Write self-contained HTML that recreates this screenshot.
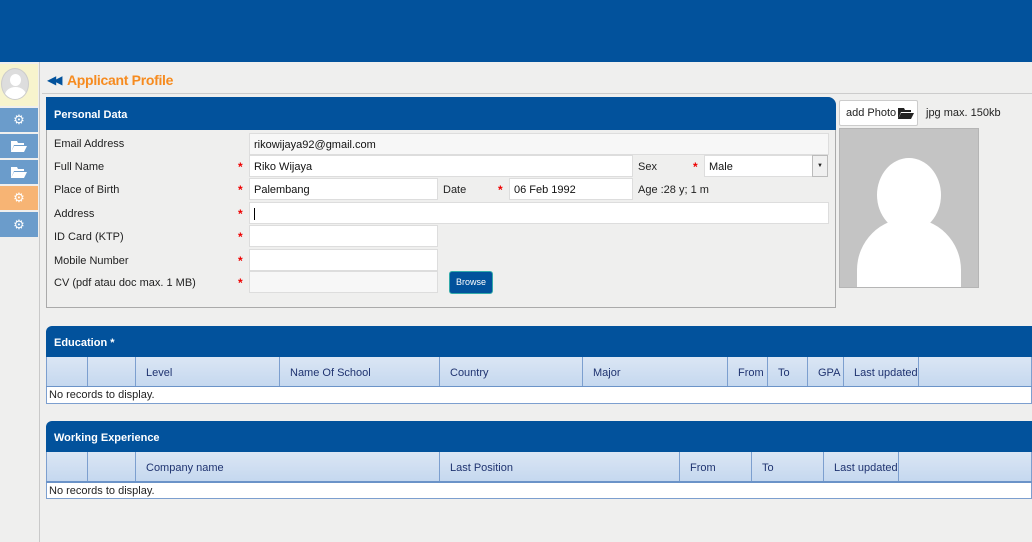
<!DOCTYPE html>
<html><head><meta charset="utf-8"><style>
*{box-sizing:border-box;margin:0;padding:0}
body{width:1032px;height:542px;overflow:hidden;background:#efefee;font-family:"Liberation Sans",Tahoma,sans-serif;font-size:11px;color:#222;position:relative}
.a{position:absolute}
.hdr{left:0;top:0;width:1032px;height:62px;background:#02529c}
.sb{left:0;top:62px;width:40px;height:480px;border-right:1px solid #c9c9c9;background:#efefee}
.btn{left:0;width:38px;height:24px;background:#6b9ccb;display:flex;align-items:center;justify-content:center}
.lbl{left:54px;font-size:11px;color:#222}
.inp{background:#fff;border:1px solid #ddd;height:22px;padding:0 4px;line-height:22px;font-size:11px;color:#111}
.st{color:#e00;font-size:12px;font-weight:bold}
.ph{background:#02529c;color:#fff;font-weight:bold;font-size:11px;padding-left:8px;border-radius:0 8px 0 0}
table{border-collapse:collapse;position:absolute}
th{background:linear-gradient(#dbe6f4,#c5d8ef);color:#1f3370;font-weight:normal;text-align:left;border-right:1px solid #7c9fcf;border-bottom:2px solid #6b93c8;height:30px;font-size:11px;padding-left:10px;padding-top:2px;white-space:nowrap}
.g{color:#fff;font-size:13px}
</style></head><body>
<div class="a hdr"></div>
<div class="a sb"></div>
<div class="a" style="left:0;top:64px;width:38px;height:42px;background:#f7f4cd"></div>
<div class="a" style="left:1px;top:68px;width:28px;height:32px;border-radius:50%;background:#ddd;overflow:hidden;border:1px solid #ccc">
<div class="a" style="left:8px;top:5px;width:11px;height:12px;border-radius:50%;background:#fff"></div>
<div class="a" style="left:3px;top:18px;width:21px;height:16px;border-radius:50% 50% 0 0;background:#fff"></div></div>
<div class="a btn" style="top:108px"><span class="g">⚙</span></div>
<div class="a btn" style="top:134px"><svg width="16" height="12"><path d="M0 1h6l1 2h6v2H3L0 12z M3 6h13l-3 6H0z" fill="#fff"/></svg></div>
<div class="a btn" style="top:160px"><svg width="16" height="12"><path d="M0 1h6l1 2h6v2H3L0 12z M3 6h13l-3 6H0z" fill="#fff"/></svg></div>
<div class="a btn" style="top:186px;background:#f7b474"><span class="g">⚙</span></div>
<div class="a btn" style="top:212px;height:25px"><span class="g">⚙</span></div>

<div class="a" style="left:47px;top:73px;color:#02529c;font-size:12px;letter-spacing:-3px">◀◀</div>
<div class="a" style="left:67px;top:72px;color:#f68b1f;font-weight:bold;font-size:14px;letter-spacing:-0.3px">Applicant Profile</div>
<div class="a" style="left:42px;top:93px;width:990px;height:1px;background:#ccc"></div>

<div class="a" style="left:46px;top:97px;width:790px;height:211px;border:1px solid #aaa;border-radius:0 8px 0 0"></div>
<div class="a ph" style="left:46px;top:97px;width:790px;height:33px;line-height:37px">Personal Data</div>

<div class="a lbl" style="top:138px">Email Address</div>
<div class="a inp" style="left:249px;top:133px;width:580px;background:#f7f7f7">rikowijaya92@gmail.com</div>
<div class="a lbl" style="top:161px">Full Name</div><div class="a st" style="left:238px;top:160px">*</div>
<div class="a inp" style="left:249px;top:155px;width:384px">Riko Wijaya</div>
<div class="a" style="left:638px;top:161px">Sex</div><div class="a st" style="left:693px;top:160px">*</div>
<div class="a inp" style="left:704px;top:155px;width:124px">Male</div>
<div class="a" style="left:812px;top:155px;width:16px;height:22px;border:1px solid #bbb;background:#f0f0f0;font-size:6px;text-align:center;line-height:20px">▼</div>
<div class="a lbl" style="top:184px">Place of Birth</div><div class="a st" style="left:238px;top:183px">*</div>
<div class="a inp" style="left:249px;top:178px;width:189px">Palembang</div>
<div class="a" style="left:443px;top:184px">Date</div><div class="a st" style="left:498px;top:183px">*</div>
<div class="a inp" style="left:509px;top:178px;width:124px">06 Feb 1992</div>
<div class="a" style="left:638px;top:184px">Age :28 y; 1 m</div>
<div class="a lbl" style="top:208px">Address</div><div class="a st" style="left:238px;top:207px">*</div>
<div class="a inp" style="left:249px;top:202px;width:580px"><span style="border-left:1px solid #000;display:inline-block;height:12px;vertical-align:middle"></span></div>
<div class="a lbl" style="top:231px">ID Card (KTP)</div><div class="a st" style="left:238px;top:230px">*</div>
<div class="a inp" style="left:249px;top:225px;width:189px"></div>
<div class="a lbl" style="top:255px">Mobile Number</div><div class="a st" style="left:238px;top:254px">*</div>
<div class="a inp" style="left:249px;top:249px;width:189px"></div>
<div class="a lbl" style="top:277px">CV (pdf atau doc max. 1 MB)</div><div class="a st" style="left:238px;top:276px">*</div>
<div class="a inp" style="left:249px;top:271px;width:189px;background:#f7f7f7"></div>
<div class="a" style="left:449px;top:271px;width:44px;height:23px;background:#02529c;border:1px solid #3aa;border-radius:3px;color:#fff;font-size:9px;text-align:center;line-height:21px">Browse</div>

<div class="a" style="left:839px;top:100px;width:79px;height:26px;background:#fff;border:1px solid #ccc;border-radius:2px;line-height:24px;padding-left:6px;white-space:nowrap;font-size:11px">add Photo</div>
<svg class="a" style="left:898px;top:107px" width="16" height="12"><path d="M0 1h6l1 2h6v2H3L0 12z M3 6h13l-3 6H0z" fill="#222"/></svg>
<div class="a" style="left:926px;top:107px">jpg max. 150kb</div>
<div class="a" style="left:839px;top:128px;width:140px;height:160px;background:#c4c4c4;border:1px solid #b5b5b5;overflow:hidden">
<div class="a" style="left:37px;top:29px;width:64px;height:74px;border-radius:50%;background:#fff"></div>
<div class="a" style="left:17px;top:89px;width:104px;height:110px;border-radius:52px 52px 0 0;background:#fff"></div></div>

<div class="a ph" style="left:46px;top:326px;width:986px;height:31px;line-height:34px;border-radius:6px 0 0 0">Education *</div>
<table style="left:46px;top:357px;width:986px">
<tr><th style="width:41px;border-left:1px solid #7c9fcf"></th><th style="width:48px"></th><th style="width:144px">Level</th><th style="width:160px">Name Of School</th><th style="width:143px">Country</th><th style="width:145px">Major</th><th style="width:40px;padding-left:10px">From</th><th style="width:40px">To</th><th style="width:36px">GPA</th><th style="width:73px">Last updated</th><th></th></tr>
</table>
<div class="a" style="left:46px;top:387px;width:986px;height:17px;background:#fff;border:1px solid #7c9fcf;border-top:none;padding-left:2px;line-height:16px">No records to display.</div>

<div class="a ph" style="left:46px;top:421px;width:986px;height:31px;line-height:34px;border-radius:6px 0 0 0">Working Experience</div>
<table style="left:46px;top:452px;width:986px">
<tr><th style="width:41px;border-left:1px solid #7c9fcf"></th><th style="width:48px"></th><th style="width:304px">Company name</th><th style="width:240px">Last Position</th><th style="width:72px">From</th><th style="width:72px">To</th><th style="width:72px">Last updated</th><th></th></tr>
</table>
<div class="a" style="left:46px;top:483px;width:986px;height:16px;background:#fff;border:1px solid #7c9fcf;border-top:none;padding-left:2px;line-height:16px">No records to display.</div>
</body></html>
